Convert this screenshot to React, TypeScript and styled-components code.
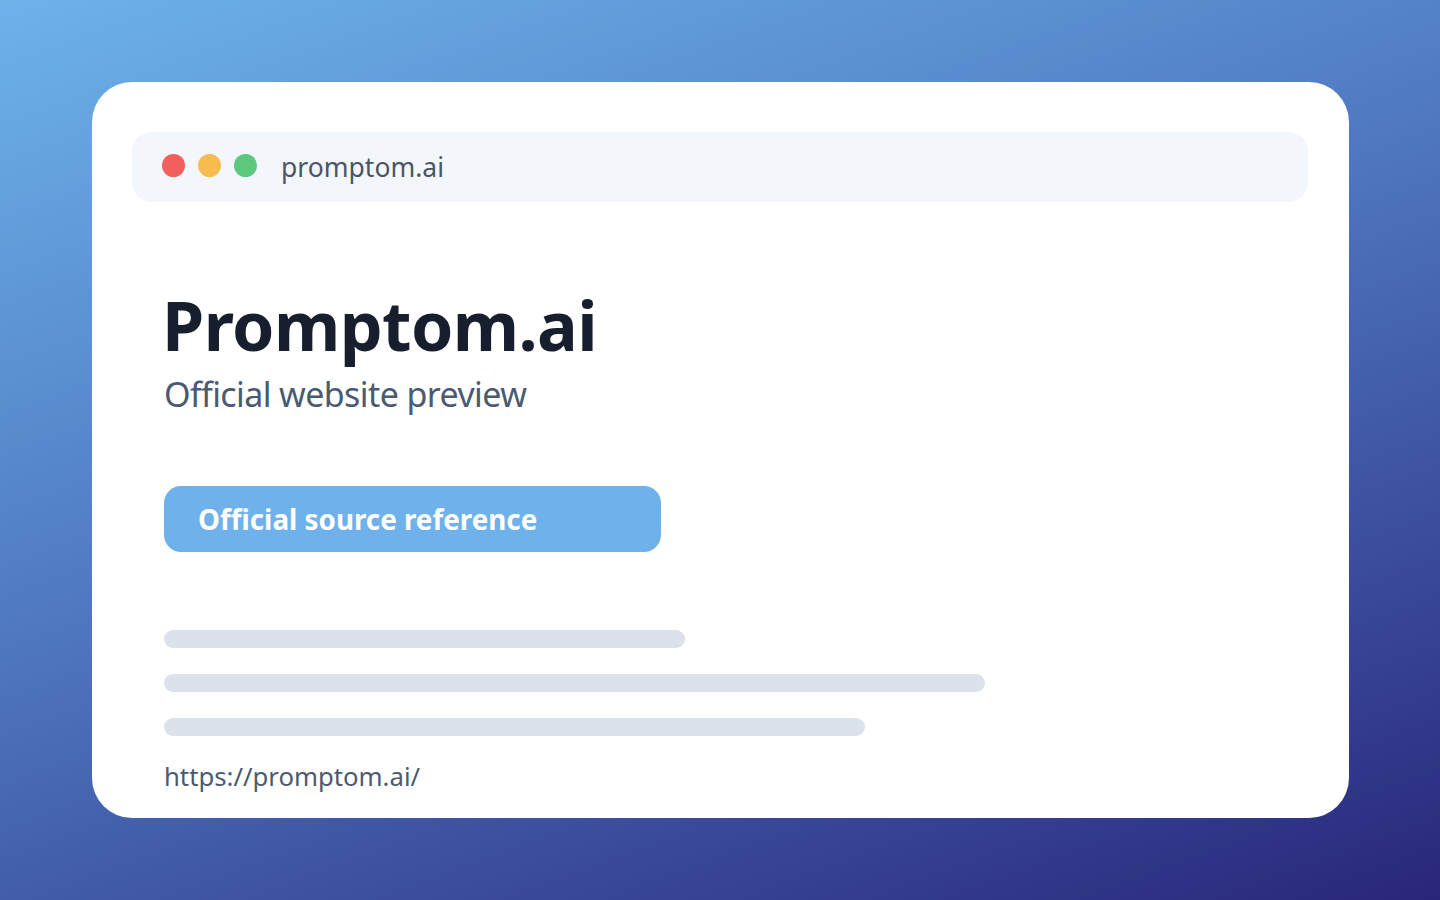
import React from 'react';
import styled, { createGlobalStyle } from 'styled-components';

const GlobalStyle = createGlobalStyle`
  html, body {
    margin: 0;
    padding: 0;
  }
  body {
    font-family: "Noto Sans", "Open Sans", sans-serif;
  }
`;

const Page = styled.div`
  width: 1440px;
  height: 900px;
  box-sizing: border-box;
  padding: 82px 91px 82px 92px;
  background: linear-gradient(160deg, #6db3ea 0%, #4f78c0 45%, #29267a 100%);
`;

const Card = styled.div`
  height: 736px;
  box-sizing: border-box;
  background: #ffffff;
  border-radius: 40px;
  padding: 50px 41px 0 40px;
  overflow: hidden;
`;

const TopBar = styled.div`
  height: 70px;
  display: flex;
  align-items: center;
  gap: 13px;
  padding-left: 30px;
  background: #f3f6fb;
  border-radius: 20px;
`;

const Dot = styled.span<{ $color: string }>`
  width: 23px;
  height: 23px;
  border-radius: 50%;
  background: ${(p) => p.$color};
  margin-top: -4px;
`;

const Address = styled.span`
  margin-left: 11px;
  font-size: 26.5px;
  color: #4b5566;
`;

const Content = styled.div`
  padding: 0 32px;
`;

const Title = styled.h1`
  margin: 83px 0 0 -2px;
  font-size: 68px;
  line-height: 80px;
  letter-spacing: -0.6px;
  font-weight: 700;
  color: #171f2e;
`;

const Subtitle = styled.p`
  margin: 6px 0 0 0;
  font-size: 34px;
  line-height: 46px;
  letter-spacing: -0.6px;
  color: #4b5a70;
`;

const SourceButton = styled.div`
  margin-top: 69px;
  width: 497px;
  height: 66px;
  box-sizing: border-box;
  padding-left: 34px;
  display: flex;
  align-items: center;
  background: #6fb1ea;
  border-radius: 17px;
  color: #ffffff;
  font-size: 27.8px;
  font-weight: 700;
`;

const Lines = styled.div`
  margin-top: 78px;
  display: flex;
  flex-direction: column;
  gap: 26px;
`;

const Line = styled.div<{ $width: number }>`
  width: ${(p) => p.$width}px;
  height: 18px;
  border-radius: 9px;
  background: #dbe2ec;
`;

const Url = styled.div`
  margin-top: 24px;
  font-size: 25.7px;
  line-height: 34px;
  color: #4b5a70;
`;

export default function App() {
  return (
    <>
      <GlobalStyle />
      <Page>
        <Card>
          <TopBar>
            <Dot $color="#f25f5c" />
            <Dot $color="#f6bc4f" />
            <Dot $color="#5bc87e" />
            <Address>promptom.ai</Address>
          </TopBar>
          <Content>
            <Title>Promptom.ai</Title>
            <Subtitle>Official website preview</Subtitle>
            <SourceButton>Official source reference</SourceButton>
            <Lines>
              <Line $width={521} />
              <Line $width={821} />
              <Line $width={701} />
            </Lines>
            <Url>https://promptom.ai/</Url>
          </Content>
        </Card>
      </Page>
    </>
  );
}
